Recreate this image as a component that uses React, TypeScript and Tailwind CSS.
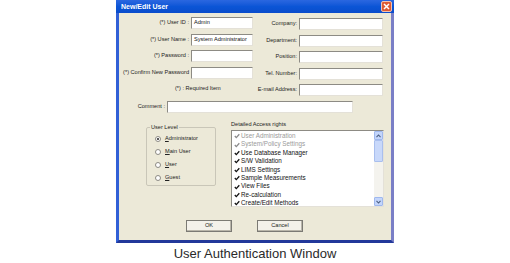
import React from 'react';

const leftFields = [
  { label: '(*) User ID :', value: 'Admin' },
  { label: '(*) User Name :', value: 'System Administrator' },
  { label: '(*) Password :', value: '' },
  { label: '(*) Confirm New Password', value: '' },
];

const rightFields = ['Company:', 'Department:', 'Position:', 'Tel. Number:', 'E-mail Address:'];

const levels = [
  { key: 'A', rest: 'dministrator', checked: true },
  { key: 'M', rest: 'ain User' },
  { key: 'U', rest: 'ser' },
  { key: 'G', rest: 'uest' },
];

const rights = [
  { name: 'User Administration', off: true },
  { name: 'System/Policy Settings', off: true },
  { name: 'Use Database Manager' },
  { name: 'S/W Validation' },
  { name: 'LIMS Settings' },
  { name: 'Sample Measurements' },
  { name: 'View Files' },
  { name: 'Re-calculation' },
  { name: 'Create/Edit Methods' },
  { name: 'Create/Edit Sequences' },
];

const inputCls =
  'h-[12px] bg-white border border-t-[#8d8b84] border-l-[#8d8b84] border-r-[#e4e1d8] border-b-[#e4e1d8] px-[2px] flex items-center text-[5.6px] leading-none text-[#111] whitespace-nowrap overflow-hidden';

const Check = ({ off }: { off?: boolean }) => (
  <svg width="6" height="6" viewBox="0 0 6 6" className="shrink-0">
    <path d="M0.8 3 L2.3 4.6 L5.3 1.2" fill="none" stroke={off ? '#8a8a8a' : '#111'} strokeWidth="1.3" />
  </svg>
);

const Arrow = ({ up }: { up?: boolean }) => (
  <div className="h-[9px] w-[9px] bg-[#c3d5fb] border border-[#9fb8ee] rounded-[1px] flex items-center justify-center">
    <svg width="5" height="4" viewBox="0 0 5 4">
      <path d={up ? 'M0.5 3.2 L2.5 1 L4.5 3.2' : 'M0.5 0.8 L2.5 3 L4.5 0.8'} fill="none" stroke="#4d6185" strokeWidth="1.1" />
    </svg>
  </div>
);

export default function App() {
  return (
    <div className="w-[510px] h-[263px] bg-white font-['Liberation_Sans',Arial,sans-serif] flex flex-col items-center overflow-hidden">
      {/* dialog window */}
      <div className="w-[278px] h-[243px] flex flex-col">
        <div className="h-[13px] bg-gradient-to-b from-[#2a67e0] via-[#0b55d6] to-[#0a4ccc] flex items-center justify-between pl-[5px] pr-[2px]">
          <span className="text-white font-bold text-[7px] leading-none">New/Edit User</span>
          <div className="w-[11px] h-[11px] rounded-[2px] bg-[#dd5a34] border border-[#f3c2b0] flex items-center justify-center">
            <svg width="7" height="7" viewBox="0 0 7 7">
              <path d="M1 1 L6 6 M6 1 L1 6" stroke="white" strokeWidth="1.5" />
            </svg>
          </div>
        </div>

        <div className="flex-1 bg-[#ece9d8] border-l-[3px] border-r-[3px] border-b-[3px] border-l-[#3160d6] border-r-[#7a7fc6] border-b-[#22389a] flex flex-col text-[5.6px] leading-none text-[#222]">
          {/* top fields */}
          <div className="flex pt-[4px]">
            <div className="flex flex-col gap-[4.5px]">
              {leftFields.map((f) => (
                <div key={f.label} className="flex items-center h-[12px]">
                  <span className="w-[72px] text-right pr-[2px] whitespace-nowrap">{f.label}</span>
                  <div className={`${inputCls} w-[62px]`}>{f.value}</div>
                </div>
              ))}
              <div className="h-[12px] flex items-center pl-[56px]">(*) : Required Item</div>
            </div>
            <div className="flex flex-col gap-[4.5px] pt-[1px]">
              {rightFields.map((l) => (
                <div key={l} className="flex items-center h-[12px]">
                  <span className="w-[46px] text-right pr-[2px] whitespace-nowrap">{l}</span>
                  <div className={`${inputCls} w-[84px]`} />
                </div>
              ))}
            </div>
          </div>

          {/* comment */}
          <div className="flex items-center h-[12px] mt-[5px]">
            <span className="w-[48px] text-right pr-[2px]">Comment :</span>
            <div className={`${inputCls} w-[186px]`} />
          </div>

          {/* user level + access rights */}
          <div className="flex mt-[9px]">
            <fieldset className="ml-[27px] mt-[3px] w-[70px] h-[61px] border border-[#c9c6b8] rounded-[2px] px-[8px]">
              <legend className="ml-[-5px] px-[1px] leading-none">User Level</legend>
              <div className="flex flex-col gap-[7px] mt-[5px]">
                {levels.map((l) => (
                  <div key={l.key} className="flex items-center gap-[4px]">
                    <div className="w-[6px] h-[6px] rounded-full bg-white border border-[#8d8b84] flex items-center justify-center">
                      {l.checked && <div className="w-[2px] h-[2px] rounded-full bg-[#222]" />}
                    </div>
                    <span>
                      <span className="underline">{l.key}</span>
                      {l.rest}
                    </span>
                  </div>
                ))}
              </div>
            </fieldset>

            <div className="ml-[15px] flex flex-col">
              <span className="h-[8px]">Detailed Access rights</span>
              <div className="w-[153px] h-[77px] bg-white border border-t-[#8d8b84] border-l-[#8d8b84] border-r-[#e4e1d8] border-b-[#e4e1d8] flex overflow-hidden">
                <div className="flex-1 flex flex-col pl-[2px] pt-[1px] overflow-hidden">
                  {rights.map((r) => (
                    <div key={r.name} className="h-[8.4px] shrink-0 flex items-center gap-[1px] text-[6.3px] whitespace-nowrap">
                      <Check off={r.off} />
                      <span className={r.off ? 'text-[#9a9a9a]' : 'text-[#111]'}>{r.name}</span>
                    </div>
                  ))}
                </div>
                <div className="w-[9px] flex flex-col bg-[#f4f3ee]">
                  <Arrow up />
                  <div className="h-[22px] bg-[#c8d8fa] border border-[#a9bfee] rounded-[1px]" />
                  <div className="flex-1" />
                  <Arrow />
                </div>
              </div>
            </div>
          </div>

          {/* buttons */}
          <div className="flex mt-[13px] ml-[67px] gap-[25px]">
            {['OK', 'Cancel'].map((b) => (
              <div
                key={b}
                className="w-[46px] h-[12px] bg-[#f3f1ea] border border-[#7b7a74] shadow-[inset_-1px_-1px_0_#b9b6aa] flex items-center justify-center"
              >
                {b}
              </div>
            ))}
          </div>
        </div>
      </div>

      <div className="flex-1 flex items-center text-[13px] text-[#2a2a2a] leading-none pt-[1px]">User Authentication Window</div>
    </div>
  );
}
